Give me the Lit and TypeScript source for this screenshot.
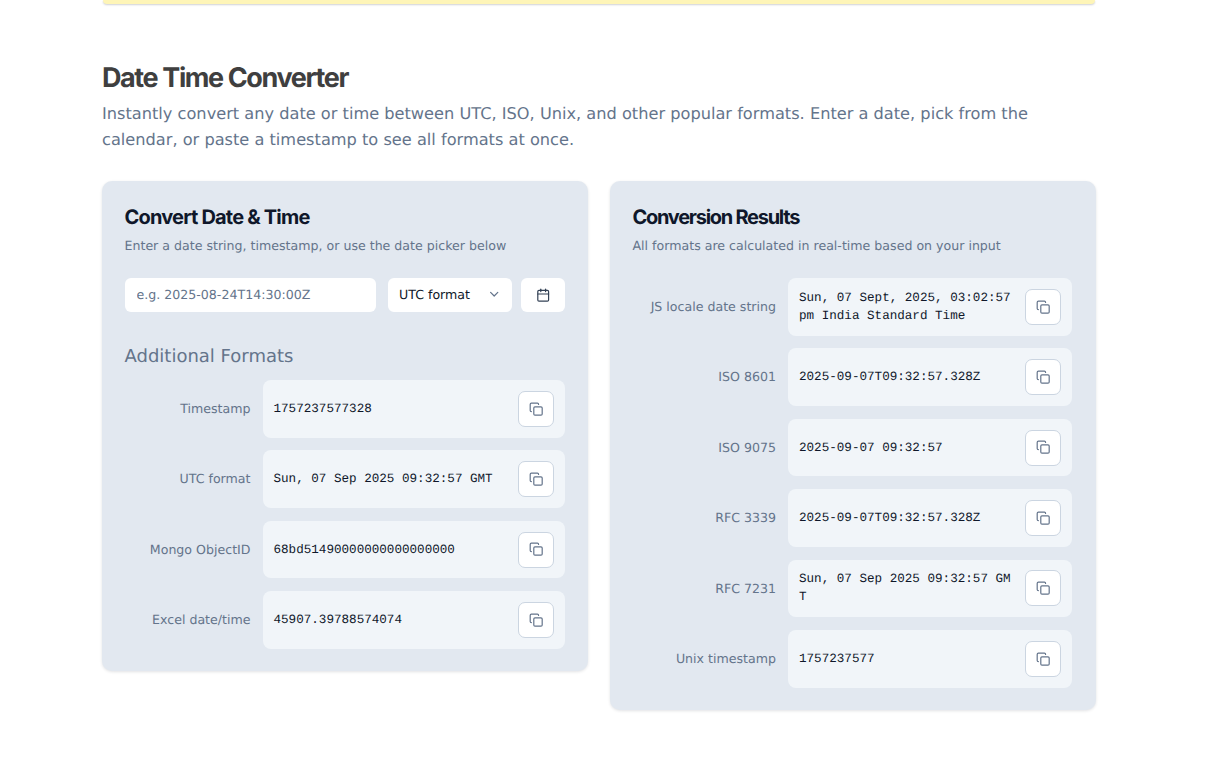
import { LitElement, css, html } from 'lit';
import { customElement } from 'lit/decorators.js';

const additional = [
  ['Timestamp', '1757237577328'],
  ['UTC format', 'Sun, 07 Sep 2025 09:32:57 GMT'],
  ['Mongo ObjectID', '68bd51490000000000000000'],
  ['Excel date/time', '45907.39788574074'],
];

const results = [
  ['JS locale date string', 'Sun, 07 Sept, 2025, 03:02:57 pm India Standard Time'],
  ['ISO 8601', '2025-09-07T09:32:57.328Z'],
  ['ISO 9075', '2025-09-07 09:32:57'],
  ['RFC 3339', '2025-09-07T09:32:57.328Z'],
  ['RFC 7231', 'Sun, 07 Sep 2025 09:32:57 GMT'],
  ['Unix timestamp', '1757237577'],
];

const copyIcon = html`<svg width="14.4" height="14.4" viewBox="0 0 24 24" fill="none" stroke="currentColor" stroke-width="2" stroke-linecap="round" stroke-linejoin="round">
  <rect x="8" y="8" width="14" height="14" rx="2"></rect>
  <path d="M4 16c-1.1 0-2-.9-2-2V4c0-1.1.9-2 2-2h10c1.1 0 2 .9 2 2"></path>
</svg>`;

@customElement('app-root')
export class AppRoot extends LitElement {
  static styles = css`
    :host {
      display: block;
      height: 760px;
      overflow: hidden;
      background: #fff;
      font-family: 'DejaVu Sans', sans-serif;
      text-rendering: geometricPrecision;
    }

    .page {
      width: 994px;
      margin-left: 102px;
    }

    .banner {
      height: 4px;
      margin: 0 1px;
      background: #fef5b8;
      border-radius: 0 0 6px 6px;
      box-shadow: 0 1px 2px rgba(15, 23, 42, 0.2);
    }

    h1 {
      margin: 59px 0 0;
      height: 30px;
      font-family: 'Inter', sans-serif;
      font-size: 27px;
      line-height: 30px;
      font-weight: 700;
      letter-spacing: -1.4px;
      color: #3f3f3f;
    }

    .intro {
      margin: 8px 0 0;
      font-size: 16.2px;
      line-height: 26px;
      color: #64748b;
    }

    .cards {
      display: grid;
      grid-template-columns: 486px 486px;
      gap: 22px;
      align-items: start;
      margin-top: 28px;
    }

    .card {
      padding: 22px 22.5px 22.5px;
      background: #e2e8f0;
      border-radius: 10px;
      box-shadow: 0 1px 3px rgba(15, 23, 42, 0.12);
    }

    h2 {
      margin: 0;
      height: 28px;
      font-family: 'Inter', sans-serif;
      font-size: 20px;
      line-height: 28px;
      font-weight: 700;
      color: #0f172a;
    }

    h2.convert {
      letter-spacing: -0.8px;
    }

    h2.results {
      letter-spacing: -1.27px;
    }

    .sub {
      margin: 5px 0 0;
      font-size: 12.6px;
      line-height: 20px;
      color: #64748b;
    }

    .controls {
      display: flex;
      margin-top: 21.7px;
    }

    .controls input,
    .select,
    .picker {
      box-sizing: border-box;
      height: 34px;
      background: #fff;
      border: 0;
      border-radius: 6px;
      font-family: inherit;
      font-size: 12.6px;
      text-rendering: geometricPrecision;
    }

    .controls input {
      width: 251px;
      padding: 0 12px;
      outline: none;
      color: #0f172a;
    }

    .controls input::placeholder {
      color: #64748b;
      opacity: 1;
    }

    .select {
      display: flex;
      align-items: center;
      justify-content: space-between;
      width: 124px;
      margin-left: 12px;
      padding: 0 10px 0 11.5px;
      color: #0f172a;
    }

    .select svg {
      color: #64748b;
    }

    .picker {
      display: flex;
      align-items: center;
      justify-content: center;
      width: 44px;
      margin-left: 9.5px;
      padding: 1px 0 0;
      color: #334155;
    }

    h3 {
      margin: 32.3px 0 10px;
      font-size: 18px;
      line-height: 26px;
      font-weight: 400;
      color: #64748b;
    }

    .rows {
      display: grid;
      row-gap: 12.8px;
      column-gap: 12px;
      align-items: center;
    }

    .rows.left {
      grid-template-columns: 126px 302.5px;
    }

    .rows.right {
      grid-template-columns: 143.5px 284px;
      margin-top: 22.1px;
    }

    .label {
      padding-bottom: 0.8px;
      font-size: 12.6px;
      text-align: right;
      color: #64748b;
    }

    .value {
      box-sizing: border-box;
      display: flex;
      align-items: center;
      gap: 14px;
      height: 57.6px;
      padding: 0 11px;
      background: #f1f5f9;
      border-radius: 8px;
    }

    .value span {
      flex: 1;
      min-width: 0;
      font-family: 'Liberation Mono', monospace;
      font-size: 12.6px;
      line-height: 18px;
      word-break: break-all;
      color: #0f172a;
    }

    .copy {
      box-sizing: border-box;
      flex: none;
      display: flex;
      align-items: center;
      justify-content: center;
      width: 36px;
      height: 36px;
      padding: 0;
      background: #fff;
      border: 1px solid #cbd5e1;
      border-radius: 7px;
      color: #64748b;
    }
  `;

  renderRows(rows: string[][], side: string) {
    return html`
      <div class="rows ${side}">
        ${rows.map(
          ([label, value]) => html`
            <div class="label">${label}</div>
            <div class="value">
              <span>${value}</span>
              <button class="copy" type="button" aria-label="Copy ${label}">${copyIcon}</button>
            </div>
          `,
        )}
      </div>
    `;
  }

  render() {
    return html`
      <div class="page">
        <div class="banner"></div>
        <h1>Date Time Converter</h1>
        <p class="intro">
          Instantly convert any date or time between UTC, ISO, Unix, and other popular formats. Enter a date, pick
          from the calendar, or paste a timestamp to see all formats at once.
        </p>
        <div class="cards">
          <section class="card">
            <h2 class="convert">Convert Date &amp; Time</h2>
            <p class="sub">Enter a date string, timestamp, or use the date picker below</p>
            <div class="controls">
              <input type="text" placeholder="e.g. 2025-08-24T14:30:00Z" />
              <div class="select">
                UTC format
                <svg width="14.4" height="14.4" viewBox="0 0 24 24" fill="none" stroke="currentColor" stroke-width="2" stroke-linecap="round" stroke-linejoin="round">
                  <path d="m6 9 6 6 6-6"></path>
                </svg>
              </div>
              <button class="picker" type="button" aria-label="Pick a date">
                <svg width="14.4" height="14.4" viewBox="0 0 24 24" fill="none" stroke="currentColor" stroke-width="2" stroke-linecap="round" stroke-linejoin="round">
                  <path d="M8 2v4"></path>
                  <path d="M16 2v4"></path>
                  <rect x="3" y="4" width="18" height="18" rx="2"></rect>
                  <path d="M3 10h18"></path>
                </svg>
              </button>
            </div>
            <h3>Additional Formats</h3>
            ${this.renderRows(additional, 'left')}
          </section>
          <section class="card">
            <h2 class="results">Conversion Results</h2>
            <p class="sub">All formats are calculated in real-time based on your input</p>
            ${this.renderRows(results, 'right')}
          </section>
        </div>
      </div>
    `;
  }
}
